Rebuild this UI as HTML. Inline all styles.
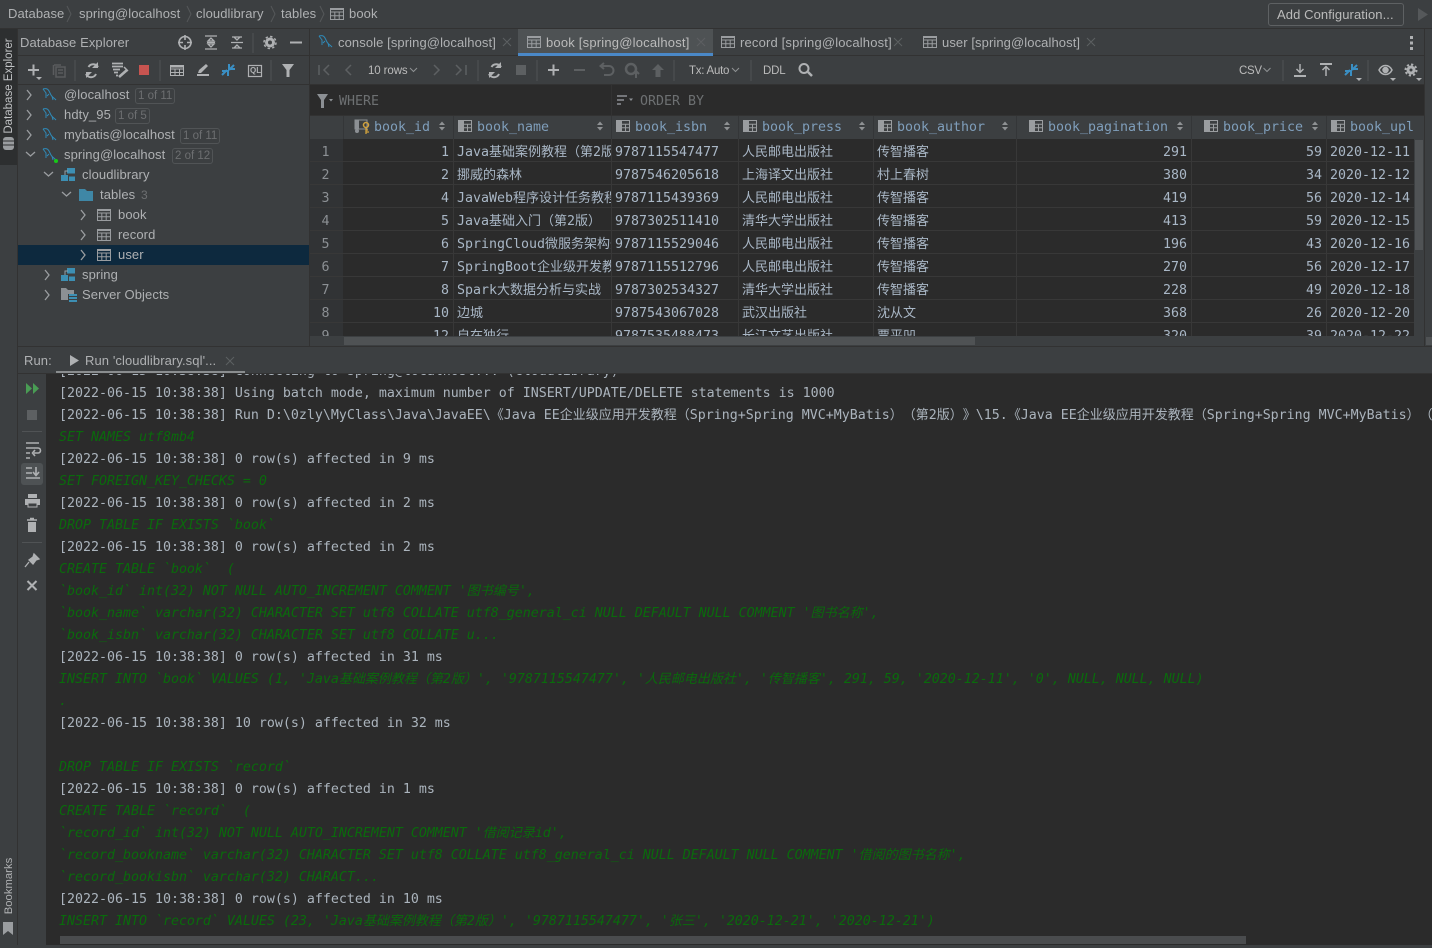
<!DOCTYPE html>
<html><head><meta charset="utf-8"><title>Database Explorer</title>
<style>
html,body{margin:0;padding:0;background:#3c3f41;}
body{width:1432px;height:948px;position:relative;overflow:hidden;font-family:"Liberation Sans","Noto Sans CJK SC",sans-serif;font-size:13px;color:#afb1b3;letter-spacing:.09px;text-spacing-trim:space-all}
.a,.t,svg.i{position:absolute}
.t{white-space:pre;line-height:20px;height:20px}
.b{position:absolute;background:#323232}
.bd{position:absolute;border:1px solid #515456;border-radius:3px;color:#6d6f71;font-size:11.5px;line-height:14px;height:14px;padding:0 2px;box-sizing:content-box;letter-spacing:0;white-space:pre}
.m{font-family:"DejaVu Sans Mono","Noto Sans CJK SC",monospace;font-size:13.29px;letter-spacing:0}
.m b{font-weight:normal;font-size:13px}
.m u{display:inline-block;width:13px;text-decoration:none;font-size:13px;overflow:visible}
.row{position:absolute;left:310px;width:1104px;height:23px;background:#2b2b2b;border-bottom:1px solid #383838;box-sizing:border-box;color:#a9b7c6;line-height:27px}
.row span{position:absolute;top:0;height:22px;white-space:pre;overflow:hidden;padding:0 4px 0 3px;box-sizing:border-box;border-right:1px solid #383838}
.row span:nth-child(1){left:0;width:33px;background:#313335;text-align:center;padding:0 2px 0 0;color:#8c9094;border-right:0}
.row span:nth-child(2){left:33px;width:111px;text-align:right;padding-right:4px}
.row span:nth-child(3){left:144px;width:158px;padding-right:0}
.row span:nth-child(4){left:302px;width:127px}
.row span:nth-child(5){left:429px;width:135px}
.row span:nth-child(6){left:564px;width:143px}
.row span:nth-child(7){left:707px;width:175px;text-align:right;padding-right:4px}
.row span:nth-child(8){left:882px;width:135px;text-align:right;padding-right:4px}
.row span:nth-child(9){left:1017px;width:87px;border-right:0}
.h{position:absolute;top:117px;height:22px;line-height:22px;color:#7f9ebb;white-space:pre}
.l{position:absolute;left:59px;height:22px;line-height:22px;white-space:pre;color:#abb4bd}
.g{color:#0a6a0c;font-style:italic}
</style></head><body>
<svg width="0" height="0" style="position:absolute"><defs>
<symbol id="tb" viewBox="0 0 14 14"><path d="M.5 1.500h13v11H.5zM.5 5h13M.5 8.700h13M4.800 5v7.500M9.200 5v7.500" fill="none" stroke="#9a9da0" stroke-width="1"/><rect x="0" y="1" width="14" height="2" fill="#9a9da0"/></symbol>
<symbol id="my" viewBox="0 0 16 16"><path d="M1 2c3-1 5 0 6 2l2 4c1 2 3 3 5 5M1 2l3 4v5M7 7l-2 2M10 9l1 4" fill="none" stroke="#2f8ab8" stroke-width="1"/></symbol>
<symbol id="sc" viewBox="0 0 14 14"><rect x="6" y="0" width="8" height="5.500" fill="#3d8fb3"/><rect x="0" y="7" width="7" height="6" fill="#3d8fb3"/><rect x="8" y="8.500" width="6" height="4.500" fill="#3d8fb3"/><path d="M7 3H4v4" fill="none" stroke="#8fa0aa"/></symbol>
<symbol id="col" viewBox="0 0 14 14"><rect x="0" y="1" width="5" height="12" fill="#9a9da0"/><path d="M5.500 1.500h8v11h-8zM5.500 5.200h8M5.500 8.800h8M9.500 5.200v7.300" fill="none" stroke="#9a9da0"/></symbol>
<symbol id="sort" viewBox="0 0 6 10"><path d="M0 4l3-3.500 3 3.500zM0 6l3 3.500 3-3.500z" fill="#8f9294"/></symbol>
</defs></svg>

<!-- top bar -->
<div class="b" style="left:0;top:28px;width:1432px;height:1px"></div>
<div class="t" style="left:8px;top:4px">Database</div>
<div class="t" style="left:79px;top:4px">spring@localhost</div>
<div class="t" style="left:196px;top:4px">cloudlibrary</div>
<div class="t" style="left:281px;top:4px">tables</div>
<div class="t" style="left:349px;top:4px">book</div>
<svg class="i" style="left:0;top:0" width="340" height="28" fill="none" stroke="#55585a"><path d="M67 6l4 8-4 8M187 6l4 8-4 8M271 6l4 8-4 8M320 6l4 8-4 8"/></svg>
<svg class="i" style="left:330px;top:7px" width="14" height="14"><use href="#tb"/></svg>
<div class="a" style="left:1268px;top:3px;width:134px;height:21px;border:1px solid #5e6163;border-radius:3px;color:#bbb;line-height:21px;text-indent:8px;white-space:pre">Add Configuration...</div>
<svg class="i" style="left:1417px;top:8px" width="12" height="14"><path d="M1 0l10 6.500-10 6.500z" fill="#55585a"/></svg>

<!-- left strip -->
<div class="b" style="left:17px;top:29px;width:1px;height:919px"></div>
<div class="a" style="left:0;top:29px;width:17px;height:136px;background:#2d2f30"></div>
<div class="t" style="left:9px;top:86px;transform:translate(-50%,-50%) rotate(-90deg);font-size:11.5px;color:#c0c2c4;letter-spacing:0;line-height:16px;height:16px">Database Explorer</div>
<svg class="i" style="left:2px;top:136px" width="13" height="15"><rect x="1" y="1" width="11" height="13" rx="3" fill="#9a9da0"/><path d="M1 5h11M1 9h11" stroke="#2d2f30"/></svg>
<div class="t" style="left:9px;top:886px;transform:translate(-50%,-50%) rotate(-90deg);font-size:11.3px;letter-spacing:0;line-height:16px;height:16px">Bookmarks</div>
<svg class="i" style="left:3px;top:922px" width="10" height="13"><path d="M0 0h10v13l-5-4-5 4z" fill="#9a9da0"/></svg>

<!-- explorer header -->
<div class="b" style="left:18px;top:55px;width:291px;height:1px"></div>
<div class="b" style="left:18px;top:84px;width:291px;height:1px"></div>
<div class="b" style="left:309px;top:29px;width:1px;height:317px"></div>
<div class="t" style="left:20px;top:33px">Database Explorer</div>
<svg class="i" style="left:170px;top:30px" width="135" height="25" fill="none" stroke="#afb1b3" stroke-width="1.600">
<circle cx="15" cy="12.500" r="6"/><path d="M15 5v5M15 15v5M8 12.500h5M17 12.500h5"/>
<path d="M35 6h12M35 19h12M41 8l-3 3h6zM41 17l-3-3h6zM37 12.500h8" stroke-width="1.300"/>
<path d="M61 12.500h12M62 7h10M62 18h10M67 10l-3-3h6zM67 15l-3 3h6z" stroke-width="1.300"/>
<path d="M83 3v20" stroke="#505355" stroke-width="1"/>
<circle cx="100" cy="12.500" r="3.500" stroke-width="3"/><circle cx="100" cy="12.500" r="6" stroke-width="1.500" stroke-dasharray="2.400 2.300"/>
<path d="M120 12.500h12" stroke-width="2"/></svg>
<!-- explorer toolbar -->
<svg class="i" style="left:18px;top:56px" width="291" height="28" fill="none" stroke="#afb1b3">
<path d="M10 14h11M15.500 8.500v11" stroke-width="2"/><path d="M18 21h6l-3 3z" fill="#afb1b3" stroke="none"/>
<path d="M36 9h7M35.500 9v10M38 11h9v10h-9zM40 14h5M40 17h5" stroke="#5a5c5e" stroke-width="1.500"/>
<path d="M57 4v21" stroke="#505355"/>
<path d="M80 11a5.500 5.500 0 0 0-9.500 0M68 18a5.500 5.500 0 0 0 10 0" stroke-width="2"/><path d="M80 6v6h-6zM68 22v-6h6z" fill="#afb1b3" stroke="none"/>
<path d="M94 7.500h11M94 10.500h11M95 13.500h7M96 16.500h4M98 19.500h2" stroke-width="1.700"/><path d="M101 21l8-7" stroke-width="2.600"/><path d="M106 11l4 4" stroke-width="1.500"/>
<rect x="121" y="9" width="10" height="10" fill="#c75450" stroke="none"/>
<path d="M142 4v21" stroke="#505355"/>
<path d="M152.500 9.500h13v10h-13zM152.500 13h13M152.500 16.500h13M157 13v6.500M161.500 13v6.500" stroke-width="1"/><rect x="152" y="9" width="14" height="2.500" fill="#afb1b3" stroke="none"/>
<path d="M179 19h12" stroke-width="2"/><path d="M180 17l1-3 7-6 2 2-7 7z" fill="#afb1b3" stroke="none"/>
<path d="M204 19l5-5M216 9l-5 5M204 15h6v5M217 13h-6V8" stroke="#3a8fc4" stroke-width="2"/>
<rect x="230.500" y="9.500" width="13" height="11" stroke-width="1.200"/>
<path d="M253 4v21" stroke="#505355"/>
<path d="M264 8h12l-4.500 6v7h-3v-7z" fill="#afb1b3" stroke="none"/></svg>
<div class="t" style="left:250px;top:61px;font-size:8px;font-weight:bold;letter-spacing:0;color:#afb1b3">QL</div>

<!-- tree -->
<div class="a" style="left:18px;top:245px;width:291px;height:20px;background:#0d293e"></div>
<svg class="i" style="left:19px;top:85px" width="95" height="220" fill="none" stroke="#9a9da0" stroke-width="1.300">
<path d="M8 5l4 5-4 5M8 25l4 5-4 5M8 45l4 5-4 5M7 67l4.500 4 4.500-4M25 87l4.500 4 4.500-4M43 107l4.500 4 4.500-4M62 125l4 5-4 5M62 145l4 5-4 5M62 165l4 5-4 5M26 185l4 5-4 5M26 205l4 5-4 5"/></svg>
<svg class="i" style="left:42px;top:87px" width="16" height="16"><use href="#my"/></svg>
<svg class="i" style="left:42px;top:107px" width="16" height="16"><use href="#my"/></svg>
<svg class="i" style="left:42px;top:127px" width="16" height="16"><use href="#my"/></svg>
<svg class="i" style="left:42px;top:147px" width="16" height="16"><use href="#my"/></svg>
<div class="a" style="left:54px;top:159px;width:4px;height:4px;border-radius:2px;background:#17c917"></div>
<svg class="i" style="left:61px;top:168px" width="14" height="14"><use href="#sc"/></svg>
<svg class="i" style="left:79px;top:189px" width="14" height="12"><path d="M0 0h6l2 2h6v10H0z" fill="#3f87a6"/></svg>
<svg class="i" style="left:97px;top:208px" width="14" height="14"><use href="#tb"/></svg>
<svg class="i" style="left:97px;top:228px" width="14" height="14"><use href="#tb"/></svg>
<svg class="i" style="left:97px;top:248px" width="14" height="14"><use href="#tb"/></svg>
<svg class="i" style="left:61px;top:268px" width="14" height="14"><use href="#sc"/></svg>
<svg class="i" style="left:61px;top:288px" width="16" height="14"><path d="M0 0h5l2 2h6v10H0z" fill="#8c9094"/><path d="M7 6h9v8H7z" fill="#3c3f41"/><path d="M8 6h8v2H8zM8 9h8v2H8zM8 12h8v2H8z" fill="#3d8fb3"/></svg>
<div class="t" style="left:64px;top:85px">@localhost</div><div class="bd" style="left:135px;top:88px">1 of 11</div>
<div class="t" style="left:64px;top:105px">hdty_95</div><div class="bd" style="left:115px;top:108px">1 of 5</div>
<div class="t" style="left:64px;top:125px">mybatis@localhost</div><div class="bd" style="left:180px;top:128px">1 of 11</div>
<div class="t" style="left:64px;top:145px">spring@localhost</div><div class="bd" style="left:172px;top:148px">2 of 12</div>
<div class="t" style="left:82px;top:165px">cloudlibrary</div>
<div class="t" style="left:100px;top:185px">tables</div><div class="t" style="left:141px;top:185px;color:#6d6f71;font-size:12px">3</div>
<div class="t" style="left:118px;top:205px">book</div>
<div class="t" style="left:118px;top:225px">record</div>
<div class="t" style="left:118px;top:245px">user</div>
<div class="t" style="left:82px;top:265px">spring</div>
<div class="t" style="left:82px;top:285px">Server Objects</div>

<!-- tabs -->
<div class="b" style="left:310px;top:55px;width:1114px;height:1px"></div>
<div class="b" style="left:310px;top:84px;width:1114px;height:1px"></div>
<div class="a" style="left:518px;top:29px;width:195px;height:26px;background:#4e5254"></div>
<div class="a" style="left:518px;top:53px;width:195px;height:3px;background:#4a88c7"></div>
<svg class="i" style="left:318px;top:34px" width="16" height="16"><use href="#my"/></svg>
<div class="t" style="left:338px;top:33px">console [spring@localhost]</div>
<svg class="i" style="left:527px;top:35px" width="14" height="14"><use href="#tb"/></svg>
<div class="t" style="left:546px;top:33px;color:#bbb;letter-spacing:.2px">book [spring@localhost]</div>
<svg class="i" style="left:721px;top:35px" width="14" height="14"><use href="#tb"/></svg>
<div class="t" style="left:740px;top:33px;letter-spacing:.17px">record [spring@localhost]</div>
<svg class="i" style="left:923px;top:35px" width="14" height="14"><use href="#tb"/></svg>
<div class="t" style="left:942px;top:33px">user [spring@localhost]</div>
<svg class="i" style="left:500px;top:36px" width="610" height="12" fill="none" stroke="#5d6062"><path d="M3 2l8 8M11 2l-8 8M197 2l8 8M205 2l-8 8M394 2l8 8M402 2l-8 8M587 2l8 8M595 2l-8 8"/></svg>
<svg class="i" style="left:1410px;top:36px" width="4" height="14"><rect y="0" width="3" height="3" fill="#afb1b3"/><rect y="5.500" width="3" height="3" fill="#afb1b3"/><rect y="11" width="3" height="3" fill="#afb1b3"/></svg>

<!-- main toolbar -->
<svg class="i" style="left:310px;top:56px" width="510" height="28" fill="none" stroke="#5d6062" stroke-width="1.500">
<path d="M9 9v10M19 9l-5 5 5 5M41 9l-5 5 5 5M124 9l5 5-5 5M146 9l5 5-5 5M156 9v10"/>
<path d="M100 12l3.500 3.500 3.500-3.500" stroke="#8f9294" stroke-width="1"/>
<path d="M168 4v21M227 4v21M364 4v21M441 4v21" stroke="#505355" stroke-width="1"/>
<path d="M191 11a5.500 5.500 0 0 0-9.500 0M179 18a5.500 5.500 0 0 0 10 0" stroke="#afb1b3" stroke-width="2"/><path d="M191 6v6h-6zM179 22v-6h6z" fill="#afb1b3" stroke="none"/>
<rect x="206" y="9" width="10" height="10" fill="#5d6062" stroke="none"/>
<path d="M238 14h11M243.500 8.500v11" stroke="#afb1b3" stroke-width="2"/>
<path d="M264 14h11" stroke-width="2"/>
<path d="M291 10h8a4.500 4.500 0 0 1 0 9h-5M294 7l-3.500 3 3.500 3" stroke-width="2"/>
<circle cx="321" cy="13" r="5" stroke-width="2.500"/><path d="M326 22v-6M323 18l3-3 3 3" stroke-width="2"/>
<path d="M342 14l6-6 6 6h-3.500v7h-5v-7z" fill="#5d6062" stroke="none"/>
<path d="M422 12l3.500 3.500 3.500-3.500" stroke="#8f9294" stroke-width="1"/>
<circle cx="494" cy="12.500" r="4.500" stroke="#afb1b3" stroke-width="2"/><path d="M498 16l4 4" stroke="#afb1b3" stroke-width="2.500"/>
</svg>
<div class="t" style="left:368px;top:61px;font-size:11.5px;letter-spacing:-.1px;color:#bbb">10 rows</div>
<div class="t" style="left:689px;top:61px;font-size:11.5px;letter-spacing:-.25px;color:#bbb">Tx: Auto</div>
<div class="t" style="left:763px;top:61px;font-size:11.5px;letter-spacing:-.2px;color:#bbb">DDL</div>
<div class="t" style="left:1239px;top:61px;font-size:11.5px;letter-spacing:-.3px;color:#bbb">CSV</div>
<svg class="i" style="left:1260px;top:56px" width="164" height="28" fill="none" stroke="#afb1b3" stroke-width="1.500">
<path d="M3.500 12l3.500 3.500 3.500-3.500" stroke="#8f9294" stroke-width="1"/>
<path d="M23 4v21M108 4v21" stroke="#505355" stroke-width="1"/>
<path d="M34 20h12" stroke-width="2"/><path d="M40 8v8M36.500 13l3.500 3.500 3.500-3.500"/>
<path d="M60 8h12" stroke-width="2"/><path d="M66 20v-9M62.500 14l3.500-3.500 3.500 3.500"/>
<path d="M85 19l5-5M97 9l-5 5M85 15h6v5M98 13h-6V8" stroke="#3a8fc4" stroke-width="2"/>
<path d="M96 22h6l-3 3z" fill="#afb1b3" stroke="none"/>
<path d="M119 14c3-6 10-6 13 0-3 6-10 6-13 0z"/><circle cx="125.500" cy="14" r="2.500" fill="#afb1b3"/>
<path d="M130 22h6l-3 3z" fill="#afb1b3" stroke="none"/>
<circle cx="151" cy="14" r="3" stroke-width="3"/><circle cx="151" cy="14" r="5.500" stroke-width="2" stroke-dasharray="2.200 2.100"/>
<path d="M156 22h6l-3 3z" fill="#afb1b3" stroke="none"/>
</svg>

<!-- where/order -->
<div class="a" style="left:310px;top:85px;width:1114px;height:30px;background:#2b2b2b"></div>
<div class="b" style="left:611px;top:85px;width:1px;height:30px"></div>
<svg class="i" style="left:316px;top:93px" width="18" height="16"><path d="M1 1h11L8 7v8H5V7z" fill="#8c9094"/><path d="M13 6h4l-2 2.500z" fill="#8c9094"/></svg>
<div class="t m" style="left:339px;top:92px;color:#6d7072">WHERE</div>
<svg class="i" style="left:617px;top:95px" width="17" height="12"><path d="M0 1h10M0 5h7M0 9h4" stroke="#8c9094" stroke-width="1.600"/><path d="M12 3.500h4l-2 2.500z" fill="#8c9094"/></svg>
<div class="t m" style="left:640px;top:92px;color:#6d7072">ORDER BY</div>

<!-- table head -->
<div class="a" style="left:310px;top:115px;width:1114px;height:24px;background:#3c3f41"></div>
<div class="b" style="left:310px;top:115px;width:1114px;height:1px"></div>
<div class="a" style="left:343px;top:116px;width:1px;height:23px;background:#343638;box-shadow:110px 0 #343638,268px 0 #343638,395px 0 #343638,530px 0 #343638,673px 0 #343638,848px 0 #343638,983px 0 #343638"></div>
<svg class="i" style="left:354px;top:119px" width="18" height="16"><rect x="1" y="1" width="12" height="9" fill="none" stroke="#8c9094"/><rect x="1" y="1" width="4" height="9" fill="#8c9094"/><circle cx="3" cy="12" r="2" fill="#8c9094"/><circle cx="12" cy="6" r="2.500" fill="none" stroke="#d1a23d" stroke-width="1.500"/><path d="M12 8v7M12 13h3M12 11h2" stroke="#d1a23d" stroke-width="1.300"/></svg>
<div class="h m" style="left:374px">book_id</div>
<svg class="i" style="left:458px;top:119px" width="14" height="14"><use href="#col"/></svg><div class="h m" style="left:477px">book_name</div>
<svg class="i" style="left:616px;top:119px" width="14" height="14"><use href="#col"/></svg><div class="h m" style="left:635px">book_isbn</div>
<svg class="i" style="left:743px;top:119px" width="14" height="14"><use href="#col"/></svg><div class="h m" style="left:762px">book_press</div>
<svg class="i" style="left:878px;top:119px" width="14" height="14"><use href="#col"/></svg><div class="h m" style="left:897px">book_author</div>
<svg class="i" style="left:1029px;top:119px" width="14" height="14"><use href="#col"/></svg><div class="h m" style="left:1048px">book_pagination</div>
<svg class="i" style="left:1204px;top:119px" width="14" height="14"><use href="#col"/></svg><div class="h m" style="left:1223px">book_price</div>
<svg class="i" style="left:1331px;top:119px" width="14" height="14"><use href="#col"/></svg><div class="h m" style="left:1350px">book_upl</div>
<svg class="i" style="left:439px;top:121px" width="6" height="10"><use href="#sort"/></svg>
<svg class="i" style="left:597px;top:121px" width="6" height="10"><use href="#sort"/></svg>
<svg class="i" style="left:724px;top:121px" width="6" height="10"><use href="#sort"/></svg>
<svg class="i" style="left:859px;top:121px" width="6" height="10"><use href="#sort"/></svg>
<svg class="i" style="left:1002px;top:121px" width="6" height="10"><use href="#sort"/></svg>
<svg class="i" style="left:1177px;top:121px" width="6" height="10"><use href="#sort"/></svg>
<svg class="i" style="left:1312px;top:121px" width="6" height="10"><use href="#sort"/></svg>

<!-- table rows -->
<div class="a m" style="left:0;top:0;width:1432px;height:336px;overflow:hidden">
<div class="row" style="top:139px"><span>1</span><span>1</span><span>Java<b>基础案例教程</b><u>（</u><b>第</b>2<b>版</b><u>）</u></span><span>9787115547477</span><span><b>人民邮电出版社</b></span><span><b>传智播客</b></span><span>291</span><span>59</span><span>2020-12-11</span></div>
<div class="row" style="top:162px"><span>2</span><span>2</span><span><b>挪威的森林</b></span><span>9787546205618</span><span><b>上海译文出版社</b></span><span><b>村上春树</b></span><span>380</span><span>34</span><span>2020-12-12</span></div>
<div class="row" style="top:185px"><span>3</span><span>4</span><span>JavaWeb<b>程序设计任务教程</b></span><span>9787115439369</span><span><b>人民邮电出版社</b></span><span><b>传智播客</b></span><span>419</span><span>56</span><span>2020-12-14</span></div>
<div class="row" style="top:208px"><span>4</span><span>5</span><span>Java<b>基础入门</b><u>（</u><b>第</b>2<b>版</b><u>）</u></span><span>9787302511410</span><span><b>清华大学出版社</b></span><span><b>传智播客</b></span><span>413</span><span>59</span><span>2020-12-15</span></div>
<div class="row" style="top:231px"><span>5</span><span>6</span><span>SpringCloud<b>微服务架构开发</b></span><span>9787115529046</span><span><b>人民邮电出版社</b></span><span><b>传智播客</b></span><span>196</span><span>43</span><span>2020-12-16</span></div>
<div class="row" style="top:254px"><span>6</span><span>7</span><span>SpringBoot<b>企业级开发教程</b></span><span>9787115512796</span><span><b>人民邮电出版社</b></span><span><b>传智播客</b></span><span>270</span><span>56</span><span>2020-12-17</span></div>
<div class="row" style="top:277px"><span>7</span><span>8</span><span>Spark<b>大数据分析与实战</b></span><span>9787302534327</span><span><b>清华大学出版社</b></span><span><b>传智播客</b></span><span>228</span><span>49</span><span>2020-12-18</span></div>
<div class="row" style="top:300px"><span>8</span><span>10</span><span><b>边城</b></span><span>9787543067028</span><span><b>武汉出版社</b></span><span><b>沈从文</b></span><span>368</span><span>26</span><span>2020-12-20</span></div>
<div class="row" style="top:323px"><span>9</span><span>12</span><span><b>自在独行</b></span><span>9787535488473</span><span><b>长江文艺出版社</b></span><span><b>贾平凹</b></span><span>320</span><span>39</span><span>2020-12-22</span></div>
</div>
<!-- scrollbars -->
<div class="a" style="left:310px;top:336px;width:1114px;height:10px;background:#3c3f41"></div>
<div class="a" style="left:344px;top:337px;width:631px;height:8px;background:#4f5254"></div>
<div class="a" style="left:1414px;top:139px;width:10px;height:197px;background:#3c3f41"></div>
<div class="a" style="left:1415px;top:140px;width:8px;height:110px;background:#505355"></div>
<div class="a" style="left:1426px;top:337px;width:6px;height:8px;background:#4f5254"></div>
<div class="b" style="left:1424px;top:29px;width:1px;height:317px"></div>
<div class="b" style="left:18px;top:346px;width:1414px;height:1px"></div>

<!-- run header -->
<div class="t" style="left:24px;top:351px">Run:</div>
<svg class="i" style="left:70px;top:355px" width="9" height="11"><path d="M0 0l9 5.500-9 5.500z" fill="#afb1b3"/></svg>
<div class="t" style="left:85px;top:351px">Run 'cloudlibrary.sql'...</div>
<svg class="i" style="left:225px;top:356px" width="10" height="10" fill="none" stroke="#5d6062"><path d="M1 1l8 8M9 1l-8 8"/></svg>
<div class="a" style="left:56px;top:371px;width:189px;height:3px;background:#8a8d8f"></div>

<!-- console -->
<div class="a" style="left:46px;top:374px;width:1386px;height:574px;background:#2b2b2b"></div>
<div class="b" style="left:18px;top:373px;width:1414px;height:1px"></div>
<div class="a m" style="left:46px;top:374px;width:1386px;height:562px;overflow:hidden">
<div style="position:absolute;left:-46px;top:-372px;width:1432px;height:948px">
<div class="l" style="top:359px">[2022-06-15 10:38:38] Connecting to spring@localhost... (cloudlibrary)</div>
<div class="l" style="top:381px">[2022-06-15 10:38:38] Using batch mode, maximum number of INSERT/UPDATE/DELETE statements is 1000</div>
<div class="l" style="top:403px">[2022-06-15 10:38:38] Run D:\0zly\MyClass\Java\JavaEE\<u>《</u>Java EE<b>企业级应用开发教程</b><u>（</u>Spring+Spring MVC+MyBatis<u>）</u><u>（</u><b>第</b>2<b>版</b><u>）</u><u>》</u>\15.<u>《</u>Java EE<b>企业级应用开发教程</b><u>（</u>Spring+Spring MVC+MyBatis<u>）</u><u>（</u><b>第</b>2<b>版</b><u>）</u><u>》</u></div>
<div class="l g" style="top:425px">SET NAMES utf8mb4</div>
<div class="l" style="top:447px">[2022-06-15 10:38:38] 0 row(s) affected in 9 ms</div>
<div class="l g" style="top:469px">SET FOREIGN_KEY_CHECKS = 0</div>
<div class="l" style="top:491px">[2022-06-15 10:38:38] 0 row(s) affected in 2 ms</div>
<div class="l g" style="top:513px">DROP TABLE IF EXISTS `book`</div>
<div class="l" style="top:535px">[2022-06-15 10:38:38] 0 row(s) affected in 2 ms</div>
<div class="l g" style="top:557px">CREATE TABLE `book`  (</div>
<div class="l g" style="top:579px">`book_id` int(32) NOT NULL AUTO_INCREMENT COMMENT '<b>图书编号</b>',</div>
<div class="l g" style="top:601px">`book_name` varchar(32) CHARACTER SET utf8 COLLATE utf8_general_ci NULL DEFAULT NULL COMMENT '<b>图书名称</b>',</div>
<div class="l g" style="top:623px">`book_isbn` varchar(32) CHARACTER SET utf8 COLLATE u...</div>
<div class="l" style="top:645px">[2022-06-15 10:38:38] 0 row(s) affected in 31 ms</div>
<div class="l g" style="top:667px">INSERT INTO `book` VALUES (1, 'Java<b>基础案例教程（第</b>2<b>版）</b>', '9787115547477', '<b>人民邮电出版社</b>', '<b>传智播客</b>', 291, 59, '2020-12-11', '0', NULL, NULL, NULL)</div>
<div class="l g" style="top:689px">.</div>
<div class="l" style="top:711px">[2022-06-15 10:38:38] 10 row(s) affected in 32 ms</div>
<div class="l g" style="top:755px">DROP TABLE IF EXISTS `record`</div>
<div class="l" style="top:777px">[2022-06-15 10:38:38] 0 row(s) affected in 1 ms</div>
<div class="l g" style="top:799px">CREATE TABLE `record`  (</div>
<div class="l g" style="top:821px">`record_id` int(32) NOT NULL AUTO_INCREMENT COMMENT '<b>借阅记录</b>id',</div>
<div class="l g" style="top:843px">`record_bookname` varchar(32) CHARACTER SET utf8 COLLATE utf8_general_ci NULL DEFAULT NULL COMMENT '<b>借阅的图书名称</b>',</div>
<div class="l g" style="top:865px">`record_bookisbn` varchar(32) CHARACT...</div>
<div class="l" style="top:887px">[2022-06-15 10:38:38] 0 row(s) affected in 10 ms</div>
<div class="l g" style="top:909px">INSERT INTO `record` VALUES (23, 'Java<b>基础案例教程（第</b>2<b>版）</b>', '9787115547477', '<b>张三</b>', '2020-12-21', '2020-12-21')</div>
</div></div>
<div class="a" style="left:60px;top:936px;width:1186px;height:8px;background:#4a4c4e"></div>
<div class="b" style="left:0;top:945px;width:1432px;height:3px;background:#3c3f41"></div>

<!-- run toolbar -->
<div class="a" style="left:21px;top:463px;width:22px;height:22px;border-radius:3px;background:#4e5254"></div>
<svg class="i" style="left:18px;top:374px" width="28" height="240" fill="none" stroke="#afb1b3">
<path d="M8 9l6 5.500-6 5.500zM15 9l6 5.500-6 5.500z" fill="#499c54" stroke="none"/>
<rect x="9" y="36" width="10" height="10" fill="#5d6062" stroke="none"/>
<path d="M4 57.500h20M4 168.500h20" stroke="#505355" stroke-width="1"/>
<path d="M8 69h13M8 74h12a2.500 2.500 0 0 1 0 5h-4M8 79h4M8 84h4M17 76l-2.500 3 2.500 3" stroke-width="1.600"/>
<path d="M8 94h6M8 99h6M8 104h14M18 93v8M15 98l3 3.500 3-3.500" stroke-width="1.600"/>
<path d="M10 120h9v4h-9z" fill="#afb1b3" stroke="none"/><path d="M7 125h15v6H7z" fill="#afb1b3" stroke="none"/><path d="M10 129h9v4h-9z" fill="#3c3f41" stroke="#afb1b3"/>
<path d="M10 148h8v10h-8z" fill="#afb1b3" stroke="none"/><path d="M9 146h10M12 144.500h4" stroke-width="1.400"/>
<path d="M16 180l5 5-3 1-3 4-4-4 4-3zM11 188l-4 5" fill="#afb1b3" stroke-width="1.300"/>
<path d="M9.500 207l9 9M18.500 207l-9 9" stroke-width="2"/>
</svg>
</body></html>
